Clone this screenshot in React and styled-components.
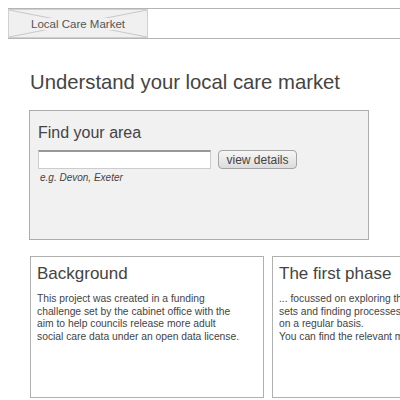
import React from 'react'
import styled, { createGlobalStyle } from 'styled-components'

const GlobalStyle = createGlobalStyle`
  html, body {
    margin: 0;
    padding: 0;
    background: #fff;
    font-family: "Liberation Sans", Arial, sans-serif;
    color: #444;
    overflow: hidden;
  }
`;

const Page = styled.div`
  width: 400px;
  height: 400px;
  overflow: hidden;
`;

const Header = styled.div`
  display: flex;
  margin: 8px 0 0 8px;
  height: 29px;
  border-top: 1px solid #b4b4b4;
  border-bottom: 1px solid #b4b4b4;
`;

const Logo = styled.div`
  position: relative;
  width: 138px;
  height: 27px;
  border: 1px solid #d0d0d0;
  background: #f0f0f0;
  display: flex;
  align-items: center;
  justify-content: center;
  font-size: 11.5px;
  color: #555;
`;

const Cross = styled.svg`
  position: absolute;
  inset: 0;
  width: 100%;
  height: 100%;
`;

const LogoText = styled.span`
  position: relative;
  background: #f0f0f0;
  padding: 0 3px;
`;

const Main = styled.div`
  padding: 0 0 0 30px;
`;

const Title = styled.h1`
  margin: 31px 0 16px;
  font-size: 20.3px;
  font-weight: normal;
  line-height: 24px;
  color: #444;
`;

const FindBox = styled.div`
  margin-left: -1px;
  width: 322px;
  height: 128px;
  background: #f1f1f1;
  border: 1px solid #acacac;
  padding: 0 8px;
  box-sizing: content-box;
`;

const FindTitle = styled.h2`
  margin: 12px 0 8px;
  font-size: 16px;
  font-weight: normal;
  line-height: 19px;
  color: #444;
`;

const SearchRow = styled.div`
  display: flex;
  align-items: center;
  gap: 7px;
`;

const Input = styled.input`
  width: 173px;
  height: 19px;
  box-sizing: border-box;
  border: 1px solid #ccc;
  border-top: 2px solid #999;
  background: #fff;
  padding: 0 3px;
`;

const Button = styled.button`
  width: 79px;
  height: 19px;
  box-sizing: border-box;
  border: 1px solid #a4a4a4;
  border-radius: 4px;
  background: linear-gradient(#f6f6f6, #dcdcdc);
  font-family: "Liberation Sans", Arial, sans-serif;
  font-size: 12px;
  color: #444;
  padding: 0;
`;

const Hint = styled.div`
  margin: 3px 0 0 2px;
  font-size: 10px;
  font-style: italic;
  color: #444;
`;

const Cards = styled.div`
  display: flex;
  gap: 8px;
  margin-top: 16px;
  width: 600px;
`;

const Card = styled.div`
  flex: none;
  width: ${p => p.$w}px;
  height: 142px;
  border: 1px solid #b0b0b0;
  padding: 0 6px;
  box-sizing: border-box;
`;

const CardTitle = styled.h3`
  margin: 7px 0 9px;
  font-size: 17px;
  font-weight: normal;
  line-height: 20px;
  color: #444;
`;

const CardText = styled.p`
  margin: 0;
  font-size: 10.3px;
  line-height: 12.5px;
  color: #444;
  white-space: pre-line;
`;

export default function App() {
  return (
    <Page>
      <GlobalStyle />
      <Header>
        <Logo>
          <Cross viewBox="0 0 138 27" preserveAspectRatio="none">
            <line x1="0" y1="0" x2="138" y2="27" stroke="#c8c8c8" strokeWidth="1" />
            <line x1="138" y1="0" x2="0" y2="27" stroke="#c8c8c8" strokeWidth="1" />
          </Cross>
          <LogoText>Local Care Market</LogoText>
        </Logo>
      </Header>
      <Main>
        <Title>Understand your local care market</Title>
        <FindBox>
          <FindTitle>Find your area</FindTitle>
          <SearchRow>
            <Input type="text" />
            <Button>view details</Button>
          </SearchRow>
          <Hint>e.g. Devon, Exeter</Hint>
        </FindBox>
        <Cards>
          <Card $w={234}>
            <CardTitle>Background</CardTitle>
            <CardText>
              {'This project was created in a funding\nchallenge set by the cabinet office with the\naim to help councils release more adult\nsocial care data under an open data license.'}
            </CardText>
          </Card>
          <Card $w={234}>
            <CardTitle>The first phase</CardTitle>
            <CardText>
              {'... focussed on exploring the available data\nsets and finding processes to publish them\non a regular basis.\nYou can find the relevant materials here.'}
            </CardText>
          </Card>
        </Cards>
      </Main>
    </Page>
  )
}
